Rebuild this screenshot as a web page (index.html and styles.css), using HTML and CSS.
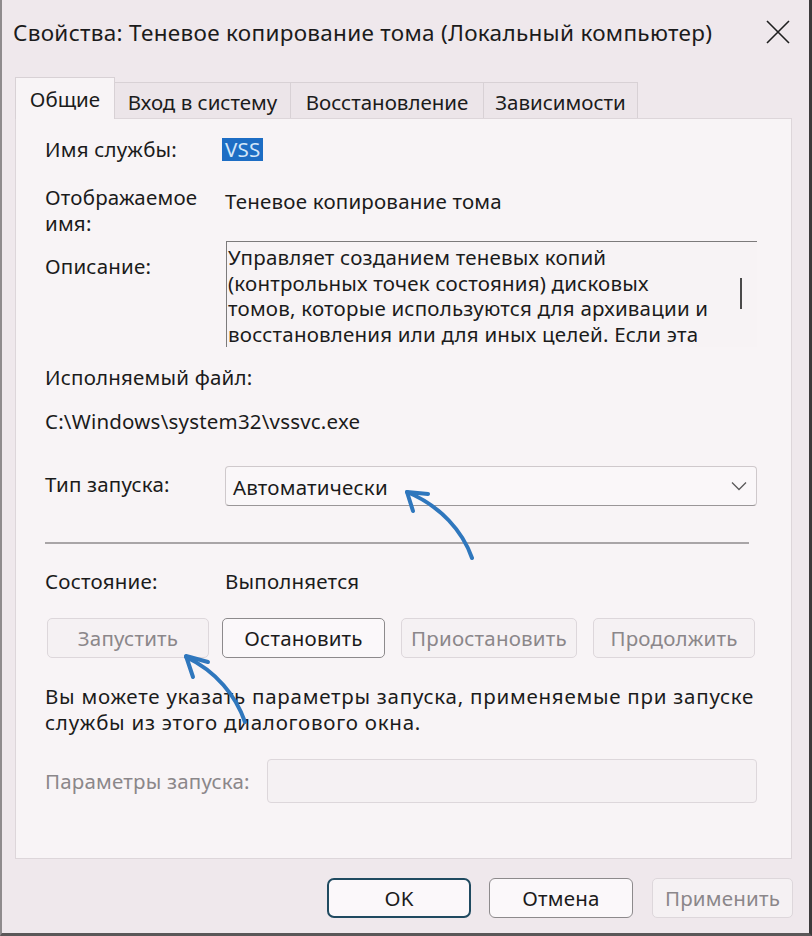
FILE: index.html
```html
<!DOCTYPE html>
<html lang="ru">
<head>
<meta charset="utf-8">
<title>Свойства</title>
<link rel="stylesheet" href="styles.css">
</head>
<body>
<div class="window">
  <div class="titlebar">
    <span class="title">Свойства: Теневое копирование тома (Локальный компьютер)</span>
    <svg class="close" width="26" height="26" viewBox="0 0 26 26"><path d="M2 2 L24 24 M24 2 L2 24" stroke="#1f1f1f" stroke-width="1.6" fill="none"/></svg>
  </div>
  <div class="tabs">
    <div class="tab active t1">Общие</div>
    <div class="tab t2">Вход в систему</div>
    <div class="tab t3">Восстановление</div>
    <div class="tab t4">Зависимости</div>
  </div>
  <div class="panel">
    <div class="row r-name">
      <div class="label">Имя службы:</div>
      <div class="value"><span class="sel">VSS</span></div>
    </div>
    <div class="row r-disp">
      <div class="label">Отображаемое<br>имя:</div>
      <div class="value v-disp">Теневое копирование тома</div>
    </div>
    <div class="row r-desc">
      <div class="label l-desc">Описание:</div>
      <div class="descbox">
        <div class="desctext">Управляет созданием теневых копий<br>(контрольных точек состояния) дисковых<br>томов, которые используются для архивации и<br>восстановления или для иных целей. Если эта</div>
        <div class="scroll"><div class="thumb"></div></div>
      </div>
    </div>
    <div class="row r-exe"><div class="value">Исполняемый файл:</div></div>
    <div class="row r-path"><div class="value">C:\Windows\system32\vssvc.exe</div></div>
    <div class="row r-start">
      <div class="label l-start">Тип запуска:</div>
      <div class="select">
        <span>Автоматически</span>
        <svg class="chev" width="16" height="10" viewBox="0 0 16 10"><path d="M1 1.5 L8 8.5 L15 1.5" stroke="#5a5a5a" stroke-width="1.3" fill="none"/></svg>
      </div>
    </div>
    <div class="sep"></div>
    <div class="row r-state">
      <div class="label">Состояние:</div>
      <div class="value">Выполняется</div>
    </div>
    <div class="btnrow">
      <div class="btn dis b1">Запустить</div>
      <div class="btn b2">Остановить</div>
      <div class="btn dis b3">Приостановить</div>
      <div class="btn dis b4">Продолжить</div>
    </div>
    <div class="para">Вы можете указать параметры запуска, применяемые при запуске<br>службы из этого диалогового окна.</div>
    <div class="row r-param">
      <div class="label l-param">Параметры запуска:</div>
      <div class="input"></div>
    </div>
  </div>
  <div class="footer">
    <div class="btn ok">OK</div>
    <div class="btn cancel">Отмена</div>
    <div class="btn dis apply">Применить</div>
  </div>
  <svg class="arrows" width="812" height="936" viewBox="0 0 812 936">
    <g stroke="#2f77bd" stroke-width="4" fill="none" stroke-linecap="round" stroke-linejoin="round">
      <path d="M472 558 C463 532 441 506 407 492"/>
      <path d="M428 494 L407 492 L413 511"/>
      <path d="M245 722 C236 696 216 671 186 657"/>
      <path d="M208 662 L186 656 L193 677"/>
    </g>
  </svg>
</div>
</body>
</html>
```

FILE: styles.css
```css
* { box-sizing: border-box; }
html, body { margin: 0; padding: 0; background: #efe8ec; }
.window {
  position: relative;
  width: 812px;
  height: 936px;
  background: #efe8ec;
  border-left: 2px solid #8f8b8d;
  border-right: 3px solid #3c3a3b;
  border-bottom: 3px solid #5a5758;
  font-family: "Noto Sans", "Open Sans", sans-serif;
  font-size: 20.5px;
  letter-spacing: 0.2px;
  color: #1b1b1b;
  overflow: hidden;
}
.titlebar {
  height: 77px;
  display: flex;
  align-items: flex-start;
  justify-content: space-between;
  padding: 17px 18px 0 11px;
}
.title { font-size: 22.5px; line-height: 32px; letter-spacing: 0.3px; }
.close { margin-top: 2px; }
.tabs {
  display: flex;
  align-items: flex-end;
  height: 41px;
  margin-left: 13px;
  position: relative;
  z-index: 2;
}
.tab {
  height: 36px;
  border: 1px solid #d8d1d5;
  border-bottom: none;
  border-left: none;
  background: #ece5e9;
  display: flex;
  align-items: center;
  justify-content: center;
  line-height: 26px;
  padding-top: 2px;
  letter-spacing: 0;
}
.tab.active {
  height: 42px;
  margin-bottom: -1px;
  background: #f8f4f6;
  border-left: 1px solid #d8d1d5;
  padding-top: 0;
}
.t1 { width: 100px; }
.t2 { width: 176px; }
.t3 { width: 193px; }
.t4 { width: 154px; }
.panel {
  margin-left: 13px;
  width: 777px;
  height: 741px;
  background: #f8f4f6;
  border: 1px solid #ddd6da;
  padding: 17px 0 0 29px;
}
.row { display: flex; line-height: 26px; }
.label { width: 180px; flex: none; }
.value { white-space: nowrap; }
.sel {
  display: inline-block;
  margin-left: -3px;
  padding: 0 3px;
  line-height: 23px;
  height: 23px;
  margin-top: 2px;
  background: #1d6dc4;
  color: #d3e6f9;
}
.r-disp { margin-top: 22px; }
.v-disp { padding-top: 4px; }
.r-desc { margin-top: 5px; }
.l-desc { padding-top: 12px; }
.descbox {
  margin-left: 1px;
  width: 531px;
  height: 106px;
  overflow: hidden;
  display: flex;
  border-top: 1px solid #7c7a7b;
  border-left: 1px solid #7c7a7b;
  background: #f7f3f5;
}
.desctext { flex: 1; padding: 3px 0 0 1px; line-height: 25.7px; white-space: nowrap; overflow: hidden; }
.scroll { width: 20px; flex: none; padding: 36px 0 0 3px; }
.thumb { width: 2px; height: 31px; background: #4a4a4a; }
.r-exe { margin-top: 17px; }
.r-path { margin-top: 18px; }
.r-start { margin-top: 32px; }
.l-start { padding-top: 5px; }
.select {
  width: 532px;
  height: 40px;
  border: 1px solid #cfc9cc;
  border-bottom-color: #9a9698;
  border-radius: 4px;
  background: #faf7f9;
  display: flex;
  align-items: center;
  justify-content: space-between;
  padding: 1px 9px 0 7px;
}
.chev { margin-top: -2px; }
.sep { margin-top: 36px; width: 704px; height: 2px; background: #a9a5a7; }
.r-state { margin-top: 24px; }
.btnrow { margin-top: 24px; display: flex; padding-left: 2px; }
.btn {
  height: 40px;
  border: 1px solid #8d8a8c;
  border-radius: 5px;
  background: #fbf8fa;
  display: flex;
  align-items: center;
  justify-content: center;
  flex: none;
}
.btn.dis { border-color: #ddd7db; color: #8b878a; background: #f5f1f3; }
.b1 { width: 162px; }
.b2 { width: 163px; margin-left: 13px; }
.b3 { width: 176px; margin-left: 16px; }
.b4 { width: 162px; margin-left: 16px; }
.para { margin-top: 25px; line-height: 26px; letter-spacing: 0.75px; white-space: nowrap; }
.r-param { margin-top: 24px; align-items: center; }
.l-param { width: 222px; color: #8b878a; }
.input {
  width: 490px;
  height: 44px;
  border: 1px solid #ddd7db;
  border-radius: 4px;
  background: #f5f1f3;
}
.footer {
  display: flex;
  justify-content: flex-end;
  padding: 19px 16px 0 0;
}
.ok { width: 144px; border: 2px solid #1f4a60; border-radius: 7px; }
.cancel { width: 144px; margin-left: 18px; border-radius: 6px; }
.apply { width: 141px; margin-left: 19px; }
.arrows { position: absolute; left: -2px; top: 0; pointer-events: none; }
```
